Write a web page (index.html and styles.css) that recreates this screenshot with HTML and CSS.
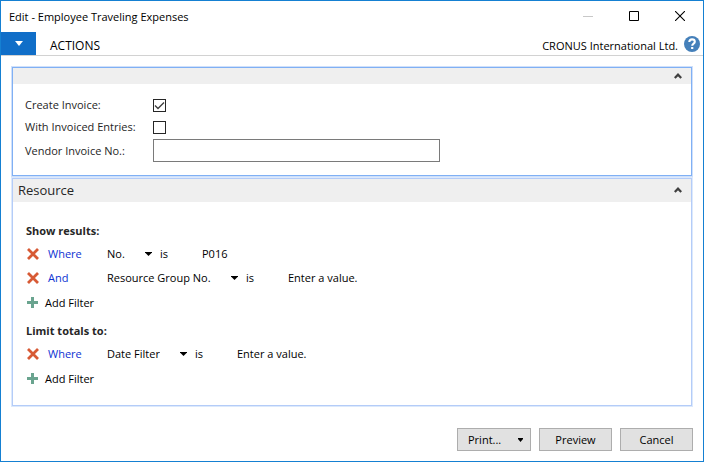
FILE: index.html
```html
<!DOCTYPE html>
<html lang="en">
<head>
<meta charset="utf-8">
<title>Edit - Employee Traveling Expenses</title>
<link rel="stylesheet" href="styles.css">
</head>
<body>
<div class="window">
  <header class="titlebar">
    <h1 class="title">Edit - Employee Traveling Expenses</h1>
    <div class="window-controls">
      <button class="window-button" type="button" aria-label="Minimize" disabled><svg width="10" height="10" viewBox="0 0 10 10"><path d="M0 5.5h10" stroke="#c8c8c8"/></svg></button>
      <button class="window-button" type="button" aria-label="Maximize"><svg width="10" height="10" viewBox="0 0 10 10"><path d="M.5 .5h9v9h-9z" fill="none" stroke="#000"/></svg></button>
      <button class="window-button" type="button" aria-label="Close"><svg width="10" height="10" viewBox="0 0 10 10"><path d="M0 0l10 10M10 0L0 10" stroke="#000" stroke-width="1.1"/></svg></button>
    </div>
  </header>
  <nav class="ribbon">
    <button class="app-menu" type="button" aria-label="Application menu"><svg width="8" height="5" viewBox="0 0 8 5"><path d="M0 0h8L4 5z" fill="#fff"/></svg></button>
    <a class="tab" href="#">ACTIONS</a>
    <span class="company">CRONUS International Ltd.</span>
    <button class="help" type="button" aria-label="Help"><svg width="16" height="16" viewBox="0 0 16 16"><circle cx="8" cy="8" r="8" fill="#4580ba"/><path d="M5.3 6C5.3 4.3 6.4 3.4 8 3.4s2.8 1 2.8 2.4C10.8 7.7 8.2 7.5 8.2 9.7" fill="none" stroke="#fff" stroke-width="2.1"/><path d="M7.1 11h2.200v2H7.100z" fill="#fff"/></svg></button>
  </nav>
  <main class="content">
    <section class="panel panel-active">
      <div class="panel-header panel-header-slim">
        <button class="collapse" type="button" aria-label="Collapse options"><svg width="8" height="6" viewBox="0 0 8 6"><path d="M.8 5L4 1.7 7.2 5" fill="none" stroke="#404040" stroke-width="2.2"/></svg></button>
      </div>
      <div class="options">
        <label for="create-invoice">Create Invoice:</label>
        <input class="check" id="create-invoice" type="checkbox" checked>
        <label for="with-invoiced">With Invoiced Entries:</label>
        <input class="check" id="with-invoiced" type="checkbox">
        <label for="vendor-invoice">Vendor Invoice No.:</label>
        <input class="text-box" id="vendor-invoice" type="text">
      </div>
    </section>
    <section class="panel">
      <div class="panel-header">
        <h2 class="panel-title">Resource</h2>
        <button class="collapse" type="button" aria-label="Collapse Resource"><svg width="8" height="6" viewBox="0 0 8 6"><path d="M.8 5L4 1.7 7.2 5" fill="none" stroke="#404040" stroke-width="2.2"/></svg></button>
      </div>
      <div class="filters">
        <div class="filter-group">
          <h3 class="group-title">Show results:</h3>
          <div class="filter-row">
            <button class="remove" type="button" aria-label="Remove filter"><svg width="12" height="12" viewBox="0 0 12 12"><path d="M1 1l10 10M11 1L1 11" stroke="#d75a35" stroke-width="2.8"/></svg></button>
            <a class="operator" href="#">Where</a>
            <span class="field"><select class="field-select" aria-label="Field"><option>No.</option></select></span>
            <span class="is">is</span>
            <input class="value" type="text" value="P016" placeholder="Enter a value." aria-label="Value">
          </div>
          <div class="filter-row">
            <button class="remove" type="button" aria-label="Remove filter"><svg width="12" height="12" viewBox="0 0 12 12"><path d="M1 1l10 10M11 1L1 11" stroke="#d75a35" stroke-width="2.8"/></svg></button>
            <a class="operator" href="#">And</a>
            <span class="field"><select class="field-select" aria-label="Field"><option>Resource Group No.</option></select></span>
            <span class="is">is</span>
            <input class="value" type="text" placeholder="Enter a value." aria-label="Value">
          </div>
          <button class="add-filter" type="button"><svg width="11" height="11" viewBox="0 0 11 11"><path d="M0 5.5h11M5.5 0v11" stroke="#6aa48f" stroke-width="3"/></svg>Add Filter</button>
        </div>
        <div class="filter-group">
          <h3 class="group-title">Limit totals to:</h3>
          <div class="filter-row">
            <button class="remove" type="button" aria-label="Remove filter"><svg width="12" height="12" viewBox="0 0 12 12"><path d="M1 1l10 10M11 1L1 11" stroke="#d75a35" stroke-width="2.8"/></svg></button>
            <a class="operator" href="#">Where</a>
            <span class="field"><select class="field-select" aria-label="Field"><option>Date Filter</option></select></span>
            <span class="is">is</span>
            <input class="value" type="text" placeholder="Enter a value." aria-label="Value">
          </div>
          <button class="add-filter" type="button"><svg width="11" height="11" viewBox="0 0 11 11"><path d="M0 5.5h11M5.5 0v11" stroke="#6aa48f" stroke-width="3"/></svg>Add Filter</button>
        </div>
      </div>
    </section>
  </main>
  <footer class="actions">
    <button class="action action-split" type="button">Print...<svg width="5" height="4" viewBox="0 0 5 4"><path d="M0 0h5v1L2.5 4 0 1z" fill="#000"/></svg></button>
    <button class="action" type="button">Preview</button>
    <button class="action" type="button">Cancel</button>
  </footer>
</div>
</body>
</html>
```
FILE: styles.css
```css
* {
  box-sizing: border-box;
}

body {
  margin: 0;
  font: 11px/16px "Open Sans", "Noto Sans", sans-serif;
  color: #000;
  background: #fff;
}

button,
input,
select {
  margin: 0;
  padding: 0;
  border: 0;
  background: none;
  font: inherit;
  color: inherit;
}

a {
  color: inherit;
  text-decoration: none;
}

h1,
h2,
h3 {
  margin: 0;
  font-size: inherit;
  font-weight: 400;
}

svg {
  display: block;
  flex: none;
}

.window {
  display: flex;
  flex-direction: column;
  min-height: 100vh;
  border: 1px solid #1580d2;
}

.titlebar {
  display: flex;
  align-items: center;
  height: 31px;
  padding-left: 8px;
}

.title {
  flex: 1;
}

.window-controls {
  display: flex;
  align-self: stretch;
}

.window-button {
  display: flex;
  align-items: center;
  justify-content: center;
  width: 46px;
  padding-bottom: 2px;
}

.ribbon {
  display: flex;
  align-items: center;
  height: 24px;
  padding-right: 3px;
  border-bottom: 1px solid #d2d2d2;
}

.app-menu {
  display: flex;
  align-items: center;
  justify-content: center;
  align-self: stretch;
  width: 35px;
  background: #106ec8;
}

.tab {
  flex: 1;
  padding: 4px 14px 0;
  font-size: 12px;
}

.company {
  padding-top: 4px;
  margin-right: 6px;
}

.content {
  display: flex;
  flex-direction: column;
  gap: 2px;
  padding: 11px 11px 0;
}

.panel {
  border: 1px solid #b4ccf8;
  box-shadow: 0 0 0 1px #dce9fc;
}

.panel-active {
  border-color: #80b0f4;
  box-shadow: 0 0 0 1px #cfe0fb;
}

.panel-header {
  display: flex;
  align-items: center;
  min-height: 23px;
  padding: 0 9px 2px 5px;
  background: #efefef;
}

.panel-header-slim {
  min-height: 16px;
  padding-bottom: 0;
}

.panel-title {
  font-size: 13px;
  color: #262626;
}

.collapse {
  margin-left: auto;
}

.options {
  display: grid;
  grid-template-columns: 128px minmax(0, 287px);
  grid-template-rows: 22px 22px 25px;
  align-items: center;
  padding: 10px 12px 12px;
  color: #262626;
}

.check {
  appearance: none;
  width: 13px;
  height: 13px;
  border: 1px solid #262626;
}

.check:checked {
  background: url("data:image/svg+xml,%3Csvg xmlns='http://www.w3.org/2000/svg' viewBox='0 0 11 11'%3E%3Cpath d='M1 5.5l3 3L10 2.5' fill='none' stroke='%23404040' stroke-width='1.4'/%3E%3C/svg%3E") center / 11px no-repeat;
}

.text-box {
  width: 100%;
  height: 23px;
  padding: 0 4px;
  border: 1px solid #7a7a7a;
}

.filters {
  display: flex;
  flex-direction: column;
  gap: 5px;
  padding: 18px 13px 14px;
}

.group-title {
  height: 22px;
  line-height: 22px;
  font-weight: 700;
  color: #262626;
}

.filter-row {
  display: grid;
  grid-template-columns: 22px 59px auto 42px 1fr;
  align-items: center;
  height: 24px;
}

.remove {
  justify-self: start;
  padding-left: 1px;
}

.operator {
  color: #0c32d2;
}

.field {
  display: flex;
  align-items: center;
  padding-right: 8px;
}

.field-select {
  appearance: none;
  padding-right: 27px;
  background: url("data:image/svg+xml,%3Csvg xmlns='http://www.w3.org/2000/svg' viewBox='0 0 7 4'%3E%3Cpath d='M0 0h7v.5L3.5 4 0 .5z'/%3E%3C/svg%3E") right center / 7px 4px no-repeat;
}

.value {
  width: 100%;
}

.value::placeholder {
  color: #000;
  opacity: 1;
}

.add-filter {
  display: flex;
  align-items: center;
  gap: 7px;
  height: 25px;
  padding-left: 1px;
}

.actions {
  display: flex;
  justify-content: flex-end;
  gap: 8px;
  padding: 22px 10px 10px;
}

.action {
  display: flex;
  align-items: center;
  justify-content: center;
  min-width: 73px;
  height: 23px;
  border: 1px solid #adadad;
  background: #e1e1e1;
}

.action-split {
  justify-content: space-between;
  min-width: 74px;
  padding: 0 7px 0 10px;
}
```
